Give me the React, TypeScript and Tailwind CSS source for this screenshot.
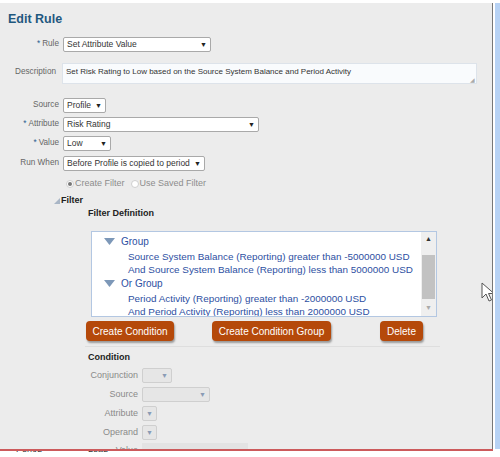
import React from "react";

const font = { fontFamily: '"Liberation Sans", Arial, sans-serif' };

const Caret = ({ muted = false }: { muted?: boolean }) => (
    <span className={`text-[7px] leading-none ${muted ? "text-[#8a9bb5]" : "text-[#222]"}`}>▼</span>
);

const Select = ({
    text,
    width,
    disabled = false,
}: {
    text?: string;
    width: string;
    disabled?: boolean;
}) => (
    <div
        className={`${width} h-[15px] flex items-center justify-between px-[3px] rounded-[2px] border ${
            disabled ? "bg-[#e6e6e6] border-[#cfcfcf]" : "bg-white border-[#a9a9a9]"
        }`}
    >
        <span className="text-[8.5px] text-[#333] whitespace-nowrap">{text}</span>
        <Caret muted={disabled} />
    </div>
);

const Row = ({
    label,
    req = false,
    children,
    className = "",
}: {
    label: string;
    req?: boolean;
    children: React.ReactNode;
    className?: string;
}) => (
    <div className={`flex items-center ${className}`}>
        <div className="w-[60px] pr-[1px] text-right text-[8.2px] text-[#666] whitespace-nowrap">
            {req && <span className="text-[#2a5f8f] mr-[2px]">*</span>}
            {label}
        </div>
        <div className="ml-[3px]">{children}</div>
    </div>
);

const CondRow = ({ label, children, className = "" }: { label: string; children: React.ReactNode; className?: string }) => (
    <div className={`flex items-center ${className}`}>
        <div className="w-[138px] text-right text-[9px] text-[#8a8a8a]">{label}</div>
        <div className="ml-[4px]">{children}</div>
    </div>
);

const Btn = ({ text, w }: { text: string; w: string }) => (
    <div
        className={`${w} h-[20px] flex items-center justify-center rounded-[4px] bg-[#b5490a] text-white text-[10px] whitespace-nowrap shadow-[1px_2px_2px_rgba(0,0,0,0.35)]`}
    >
        {text}
    </div>
);

const Tri = () => (
    <svg width="11" height="7" viewBox="0 0 11 7" className="shrink-0">
        <path d="M0 0 L11 0 L5.5 7 Z" fill="#7d98b8" />
    </svg>
);

export default function App() {
    return (
        <div className="w-[500px] h-[457px] bg-white relative overflow-hidden" style={font}>
            <div className="flex h-[449px] pt-[3px]">
                <div className="w-[493px] bg-[#ececec] border-r border-[#777] overflow-hidden relative">
                    <div className="pl-[8px] pt-[7px] text-[12.5px] font-bold text-[#1f587f] leading-[18px]">Edit Rule</div>

                    <Row label="Rule" req className="mt-[9px]">
                        <Select text="Set Attribute Value" width="w-[148px]" />
                    </Row>

                    <div className="flex items-start mt-[11px]">
                        <div className="w-[56px] pt-[3px] text-right text-[8.2px] text-[#666]">Description</div>
                        <div className="ml-[6px] w-[415px] h-[21px] bg-[#f9fbfd] border border-[#dde3ea] px-[3px] pt-[2px] text-[8px] text-[#333] relative">
                            Set Risk Rating to Low based on the Source System Balance and Period Activity
                            <span className="absolute right-[1px] bottom-[0px] text-[6px] text-[#aaa] leading-none">◢</span>
                        </div>
                    </div>

                    <Row label="Source" className="mt-[14px]">
                        <Select text="Profile" width="w-[43px]" />
                    </Row>
                    <Row label="Attribute" req className="mt-[4px]">
                        <Select text="Risk Rating" width="w-[196px]" />
                    </Row>
                    <Row label="Value" req className="mt-[4px]">
                        <Select text="Low" width="w-[48px]" />
                    </Row>
                    <Row label="Run When" className="mt-[5px]">
                        <Select text="Before Profile is copied to period" width="w-[142px]" />
                    </Row>

                    <div className="flex items-center ml-[66px] mt-[7px] text-[9px] text-[#8c8c8c] h-[12px]">
                        <span className="w-[8px] h-[8px] rounded-full border border-[#cfcfcf] bg-white flex items-center justify-center">
                            <span className="w-[4px] h-[4px] rounded-full bg-[#777]" />
                        </span>
                        <span className="ml-[1px]">Create Filter</span>
                        <span className="ml-[6px] w-[8px] h-[8px] rounded-full border border-[#cfcfcf] bg-white" />
                        <span className="ml-[1px]">Use Saved Filter</span>
                    </div>

                    <div className="flex items-center ml-[54px] mt-[5px] h-[12px]">
                        <svg width="6" height="6" viewBox="0 0 6 6">
                            <path d="M6 0 L6 6 L0 6 Z" fill="#a9b6c6" />
                        </svg>
                        <span className="ml-[1px] text-[9px] font-bold text-[#222]">Filter</span>
                    </div>
                    <div className="ml-[88px] text-[9px] font-bold text-[#222] h-[12px] leading-[12px]">Filter Definition</div>

                    <div className="ml-[91px] mt-[12px] w-[346px] h-[86px] flex border border-[#b3c7e2] bg-white">
                        <div className="flex-1 overflow-hidden text-[9.9px] text-[#2d4fa2] leading-[13px] pl-[12px] pt-[3px] whitespace-nowrap">
                            <div className="flex items-center gap-[6px]">
                                <Tri />
                                <span className="text-[10px]">Group</span>
                            </div>
                            <div className="pl-[24px] mt-[2px]">Source System Balance (Reporting) greater than -5000000 USD</div>
                            <div className="pl-[24px]">And Source System Balance (Reporting) less than 5000000 USD</div>
                            <div className="flex items-center gap-[6px] mt-[1px]">
                                <Tri />
                                <span className="text-[10px]">Or Group</span>
                            </div>
                            <div className="pl-[24px] mt-[2px]">Period Activity (Reporting) greater than -2000000 USD</div>
                            <div className="pl-[24px]">And Period Activity (Reporting) less than 2000000 USD</div>
                        </div>
                        <div className="w-[15px] bg-[#efefef] flex flex-col items-center">
                            <span className="text-[7px] text-[#333] mt-[3px] leading-none">▲</span>
                            <div className="w-[13px] h-[44px] bg-[#c2c2c2] mt-[13px]" />
                            <span className="text-[7px] text-[#aaa] mt-[5px] leading-none">▼</span>
                        </div>
                    </div>

                    <div className="ml-[86px] mt-[4px] w-[352px] flex items-center">
                        <Btn text="Create Condition" w="w-[88px]" />
                        <div className="ml-[38px]">
                            <Btn text="Create Condition Group" w="w-[119px]" />
                        </div>
                        <div className="ml-auto mr-[15px]">
                            <Btn text="Delete" w="w-[43px]" />
                        </div>
                    </div>
                    <div className="ml-[85px] mt-[5px] w-[355px] h-[1px] bg-[#dedede]" />

                    <div className="ml-[88px] mt-[4px] text-[9px] font-bold text-[#222] h-[12px] leading-[12px]">Condition</div>
                    <CondRow label="Conjunction" className="mt-[5px]">
                        <Select width="w-[30px]" disabled />
                    </CondRow>
                    <CondRow label="Source" className="mt-[4px]">
                        <Select width="w-[68px]" disabled />
                    </CondRow>
                    <CondRow label="Attribute" className="mt-[4px]">
                        <Select width="w-[15px]" disabled />
                    </CondRow>
                    <CondRow label="Operand" className="mt-[4px]">
                        <Select width="w-[15px]" disabled />
                    </CondRow>
                    <CondRow label="Value" className="mt-[3px]">
                        <div className="w-[106px] h-[15px] bg-[#e3e3e3]" />
                    </CondRow>

                    <svg
                        width="20"
                        height="22"
                        viewBox="0 0 20 22"
                        className="absolute left-[481px] top-[279px]"
                    >
                        <path d="M1 1 L1 16 L5 12 L8 19 L10.5 18 L7.5 11.5 L13 11.5 Z" fill="white" stroke="#555" strokeWidth="1" />
                    </svg>
                </div>
                <div className="w-[2px]" />
                <div className="flex-1 bg-[#b7d2f4]" />
            </div>
            <div className="h-[2px] w-[493px] bg-[#cc5a5c]" />
            <div className="w-[493px] h-[6px] overflow-hidden relative">
                <span className="absolute left-[16px] top-[-8px] text-[9px] text-[#333]">Period</span>
                <span className="absolute left-[88px] top-[-8px] text-[9px] text-[#333]">Lead</span>
            </div>
        </div>
    );
}
